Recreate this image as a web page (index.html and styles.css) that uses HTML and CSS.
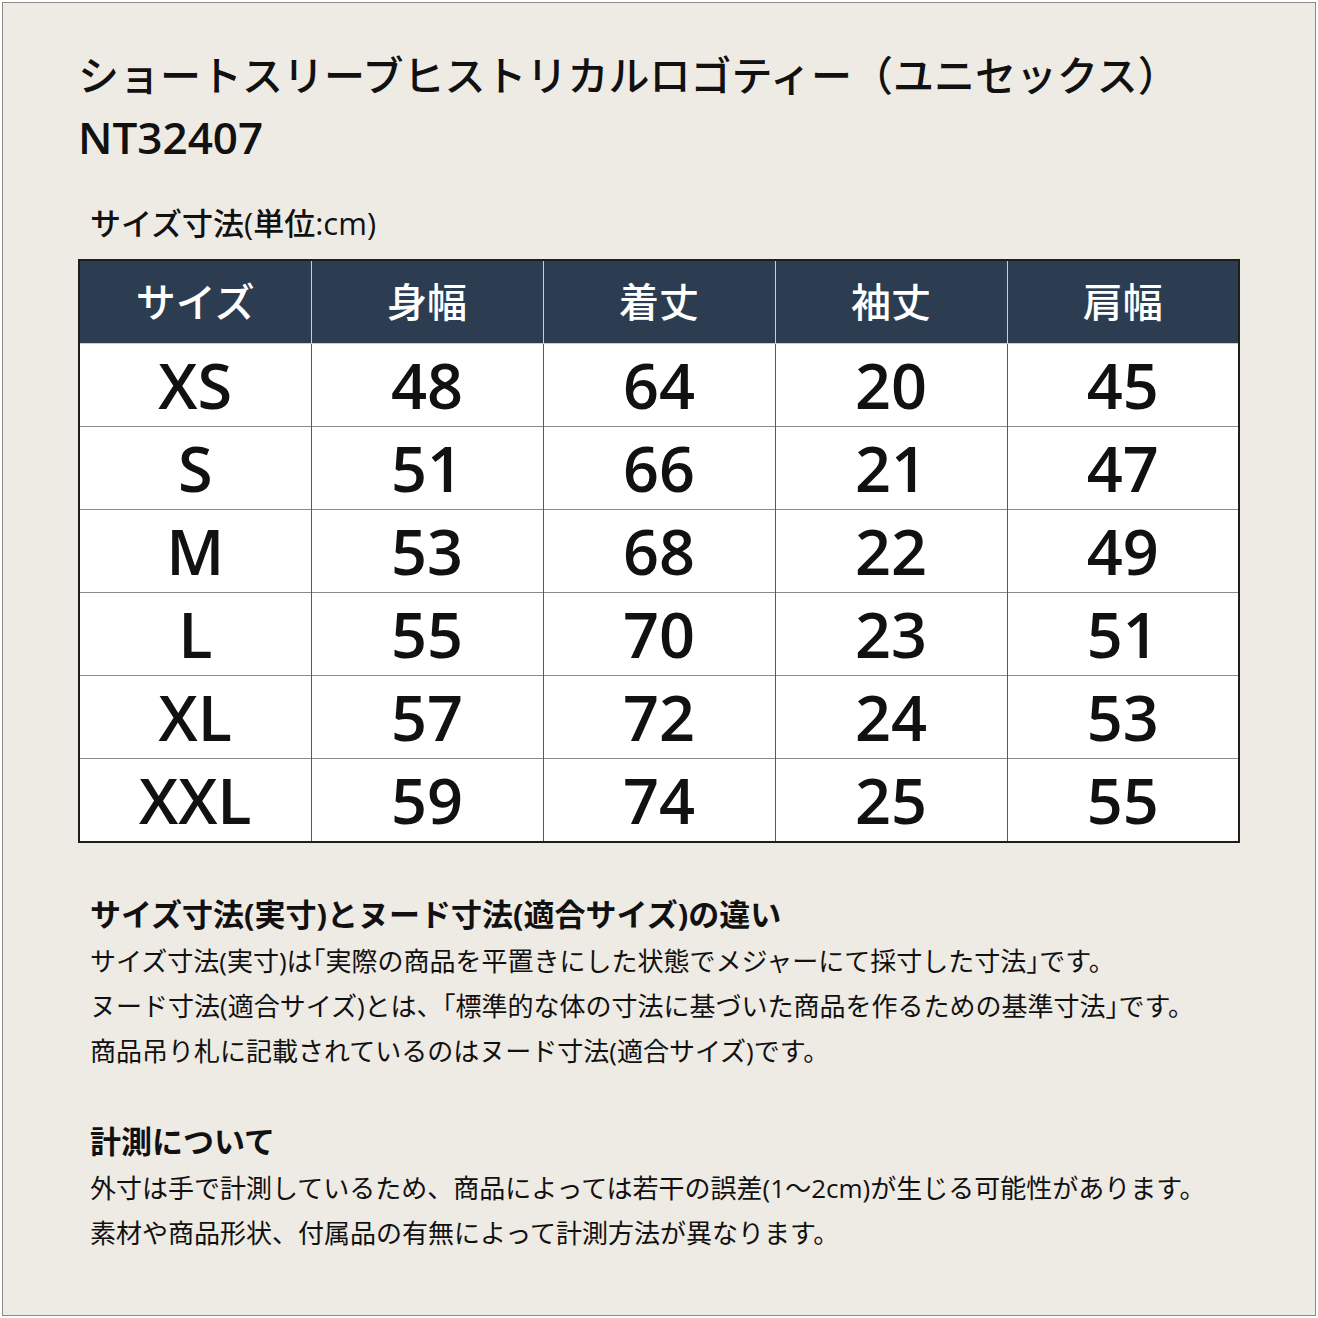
FILE: index.html
```html
<!DOCTYPE html>
<html lang="ja">
<head>
<meta charset="utf-8">
<link rel="stylesheet" href="styles.css">
</head>
<body>
<div class="frame">
  <h1 class="title">ショートスリーブヒストリカルロゴティー（ユニセックス）</h1>
  <div class="code">NT32407</div>
  <div class="unit">サイズ寸法(単位:cm)</div>
  <table class="size-table">
    <thead>
      <tr><th>サイズ</th><th>身幅</th><th>着丈</th><th>袖丈</th><th>肩幅</th></tr>
    </thead>
    <tbody>
      <tr><td>XS</td><td>48</td><td>64</td><td>20</td><td>45</td></tr>
      <tr><td>S</td><td>51</td><td>66</td><td>21</td><td>47</td></tr>
      <tr><td>M</td><td>53</td><td>68</td><td>22</td><td>49</td></tr>
      <tr><td>L</td><td>55</td><td>70</td><td>23</td><td>51</td></tr>
      <tr><td>XL</td><td>57</td><td>72</td><td>24</td><td>53</td></tr>
      <tr><td>XXL</td><td>59</td><td>74</td><td>25</td><td>55</td></tr>
    </tbody>
  </table>
  <section class="note first">
    <h2>サイズ寸法(実寸)とヌード寸法(適合サイズ)の違い</h2>
    <p>サイズ寸法(実寸)は<span class="br">「</span>実際の商品を平置きにした状態でメジャーにて採寸した寸法<span class="br">」</span>です。</p>
    <p>ヌード寸法(適合サイズ)とは、<span class="br">「</span>標準的な体の寸法に基づいた商品を作るための基準寸法<span class="br">」</span>です。</p>
    <p>商品吊り札に記載されているのはヌード寸法(適合サイズ)です。</p>
  </section>
  <section class="note second">
    <h2>計測について</h2>
    <p>外寸は手で計測しているため、商品によっては若干の誤差(1～2cm)が生じる可能性があります。</p>
    <p>素材や商品形状、付属品の有無によって計測方法が異なります。</p>
  </section>
</div>
</body>
</html>
```
FILE: styles.css
```css
html, body {
  margin: 0;
  padding: 0;
  background: #ffffff;
}
body {
  font-family: "Open Sans", "Noto Sans CJK JP", sans-serif;
  color: #111111;
}
.frame {
  box-sizing: border-box;
  width: 1314px;
  height: 1314px;
  margin: 2px;
  border: 1px solid #8a8a87;
  background: #eeeae4;
  padding: 46px 0 0 75px;
}
.title {
  margin: 0;
  font-family: "Noto Sans CJK JP", sans-serif;
  font-size: 41px;
  line-height: 48px;
  font-weight: 500;
}
.code {
  margin-top: 15px;
  font-size: 44px;
  line-height: 50px;
  font-weight: 600;
}
.unit {
  margin-top: 40px;
  margin-left: 12px;
  font-size: 31px;
  line-height: 42px;
  font-weight: 500;
}
.size-table {
  margin-top: 15px;
  width: 1162px;
  border-collapse: collapse;
  table-layout: fixed;
  border: 2px solid #1e1e1e;
  background: #ffffff;
}
.size-table th,
.size-table td {
  text-align: center;
  padding: 0;
}
.size-table th {
  height: 77px;
  padding-bottom: 5px;
  background: #2c3d51;
  color: #ffffff;
  font-family: "Noto Sans CJK JP", sans-serif;
  font-size: 40px;
  font-weight: 500;
  line-height: 1;
  border-left: 1px solid #c9ced4;
  border-bottom: 1px solid #c9ced4;
}
.size-table th:first-child { border-left: none; }
.size-table td {
  height: 81px;
  padding-bottom: 1px;
  font-size: 63px;
  font-weight: 600;
  line-height: 1;
  border-left: 1px solid #5a5a5a;
  border-top: 1px solid #8a8a8a;
}
.size-table td:first-child { border-left: none; }
.size-table tbody tr:first-child td { border-top: none; }
.note {
  margin-left: 12px;
}
.note.first { margin-top: 50px; }
.note.second { margin-top: 46px; }
.note h2 {
  margin: 0 0 4px;
  font-size: 31px;
  line-height: 42px;
  font-weight: 700;
}
.note p {
  margin: 0;
  font-size: 26px;
  line-height: 45px;
  font-weight: 400;
}
.note .br {
  font-feature-settings: "halt";
}
```
